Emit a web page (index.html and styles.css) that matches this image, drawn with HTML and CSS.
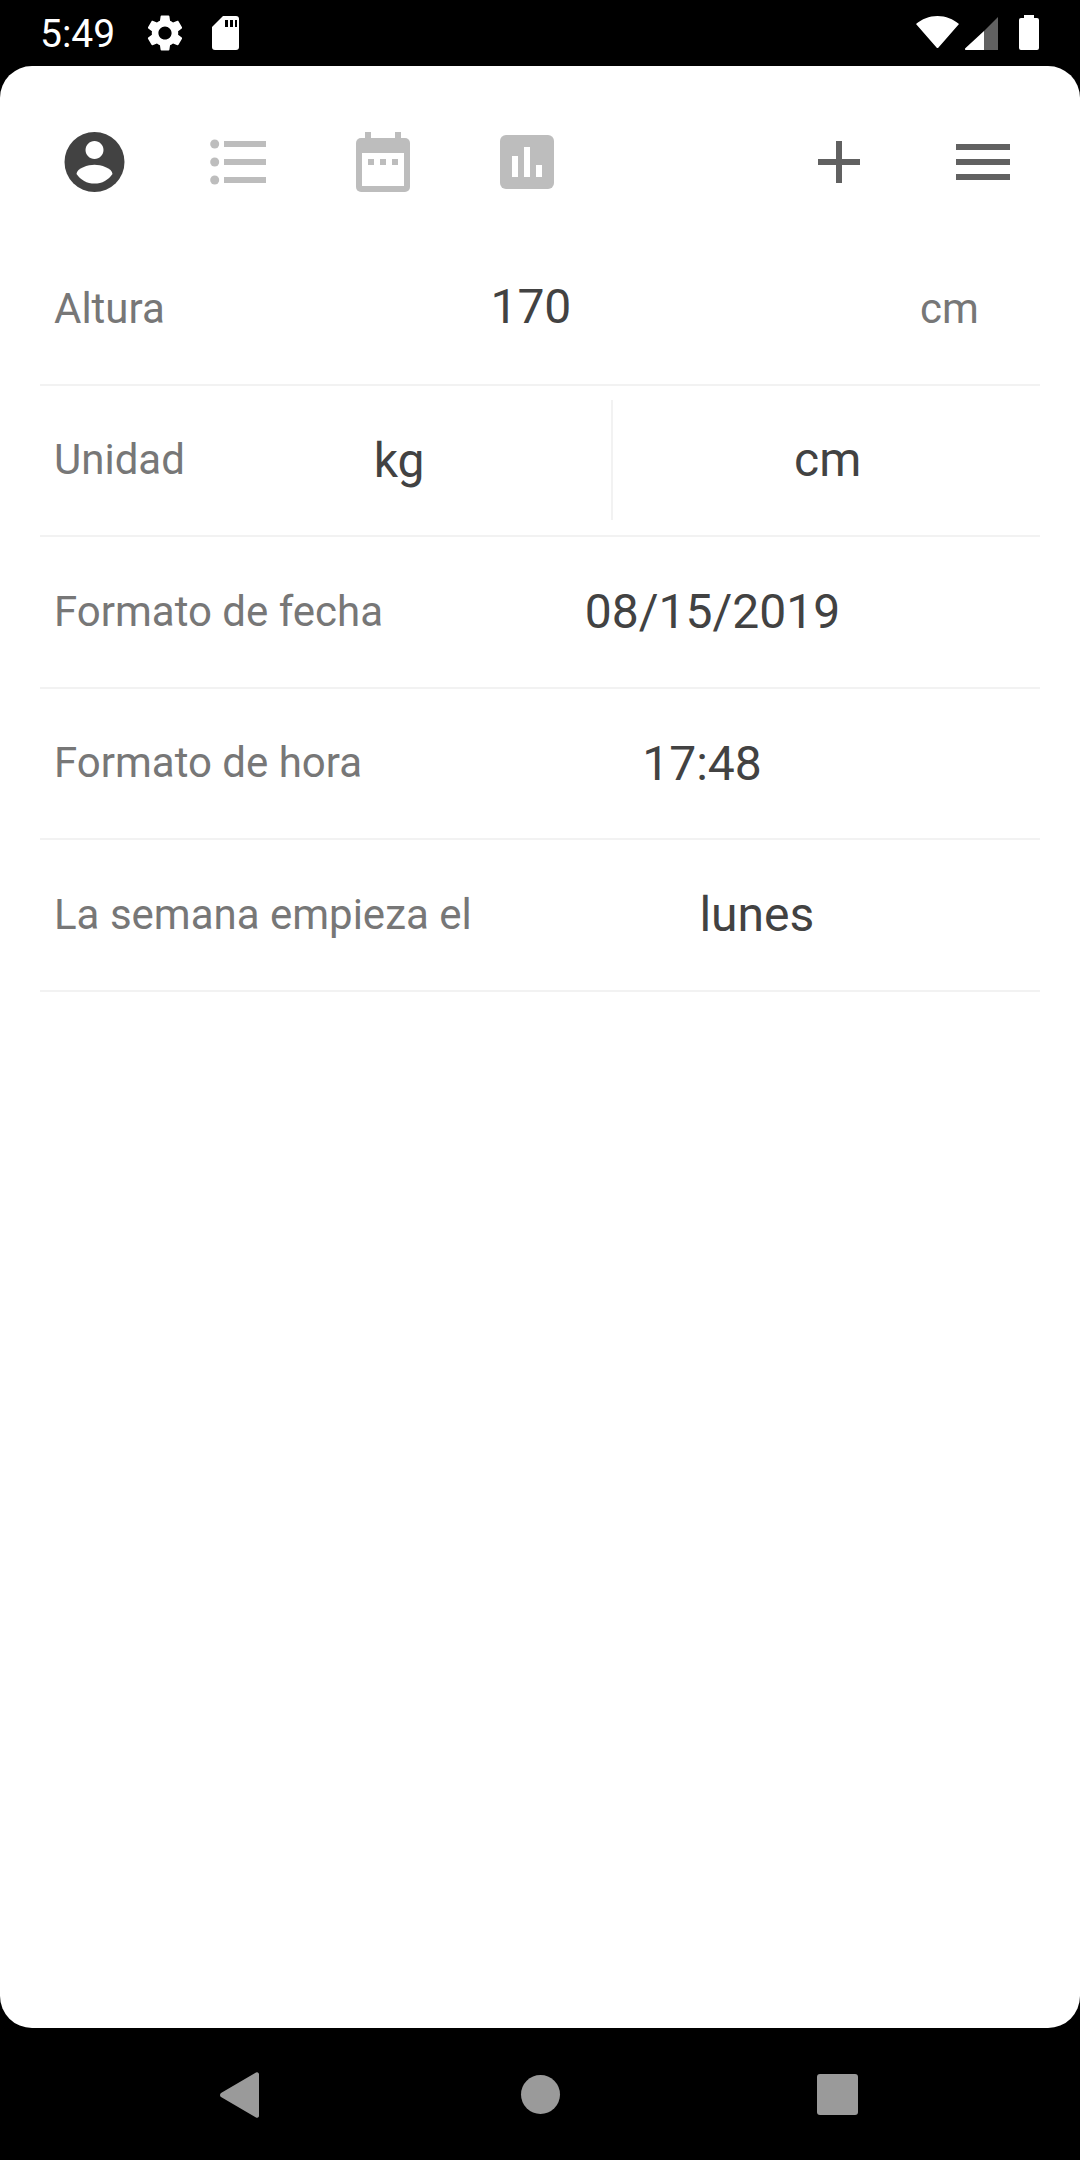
FILE: index.html

```html
<!DOCTYPE html>
<html lang="es">
<head>
    <meta charset="UTF-8">
    <meta name="viewport" content="width=device-width, initial-scale=1.0">
    <title>Ajustes</title>
    <link rel="stylesheet" href="styles.css">
</head>
<body>
    <div class="status-bar">
        <span class="status-time">5:49</span>
        <svg class="gear-icon" width="44" height="66" viewBox="0 0 44 66" fill="#fff"><g transform="translate(0 11) scale(1.8333)"><path fill-rule="evenodd" d="M19.14 12.94c.04-.3.06-.61.06-.94 0-.32-.02-.64-.07-.94l2.03-1.58c.18-.14.23-.41.12-.61l-1.92-3.32c-.12-.22-.37-.29-.59-.22l-2.39.96c-.5-.38-1.03-.7-1.62-.94l-.36-2.54c-.04-.24-.24-.41-.48-.41h-3.84c-.24 0-.43.17-.47.41l-.36 2.54c-.59.24-1.13.57-1.62.94l-2.39-.96c-.22-.08-.47 0-.59.22L2.74 8.87c-.12.21-.08.47.12.61l2.03 1.58c-.05.3-.09.63-.09.94s.02.64.07.94l-2.03 1.58c-.18.14-.23.41-.12.61l1.92 3.32c.12.22.37.29.59.22l2.39-.96c.5.38 1.03.7 1.62.94l.36 2.54c.05.24.24.41.48.41h3.84c.24 0 .44-.17.47-.41l.36-2.54c.59-.24 1.13-.56 1.62-.94l2.39.96c.22.08.47 0 .59-.22l1.92-3.32c.12-.22.07-.47-.12-.61l-2.01-1.58zM12 15.6c-1.98 0-3.6-1.62-3.6-3.6s1.62-3.6 3.6-3.6 3.6 1.62 3.6 3.6-1.62 3.6-3.6 3.6z"/></g></svg>
        <svg class="sd-icon" width="27" height="66" viewBox="0 0 27 66"><path fill="#fff" d="M11 16h13a3 3 0 0 1 3 3v28a3 3 0 0 1-3 3H3a3 3 0 0 1-3-3V27z"/><path fill="#000" d="M13 20h3v7h-3zM18 20h3v7h-3zM23 20h2v7h-2z"/></svg>
        <svg class="wifi-icon" width="43" height="66" viewBox="0 0 43 66"><path fill="#fff" d="M0 24C6 19 13 16 21.5 16S37 19 43 24L22.500 47.500a1.300 1.300 0 0 1-2 0z"/></svg>
        <svg class="signal-icon" width="33" height="66" viewBox="0 0 33 66"><path fill="#616161" d="M19 31 33 17v33H19z"/><path fill="#fff" d="M19 31v19H1a1 1 0 0 1-.700-1.700z"/></svg>
        <svg class="battery-icon" width="20" height="66" viewBox="0 0 20 66"><path fill="#fff" d="M5 15h10v3h3a2 2 0 0 1 2 2v28a2 2 0 0 1-2 2H2a2 2 0 0 1-2-2V20a2 2 0 0 1 2-2h3z"/></svg>
    </div>

    <div class="card">
        <div class="toolbar">
            <div class="tool">
                <svg width="72" height="72" viewBox="0 0 72 72"><circle cx="36.500" cy="36" r="30" fill="#424242"/><g transform="translate(.5 0) scale(3)" fill="#fff"><path d="M12 5c1.66 0 3 1.34 3 3s-1.34 3-3 3-3-1.34-3-3 1.34-3 3-3z"/><path d="M12 19.200c-2.500 0-4.710-1.280-6-3.220.03-1.990 4-3.080 6-3.080 1.990 0 5.970 1.090 6 3.080-1.290 1.940-3.500 3.220-6 3.220z"/></g></svg>
            </div>
            <div class="tool">
                <svg width="72" height="72" viewBox="0 0 72 72" fill="#bdbdbd"><circle cx="12.700" cy="18" r="4.500"/><circle cx="12.700" cy="36" r="4.500"/><circle cx="12.700" cy="54" r="4.500"/><rect x="22" y="15" width="42" height="6"/><rect x="22" y="33" width="42" height="6"/><rect x="22" y="51" width="42" height="6"/></svg>
            </div>
            <div class="tool">
                <svg width="72" height="72" viewBox="0 0 72 72" fill="#bdbdbd"><rect x="19" y="6" width="6" height="8"/><rect x="49" y="6" width="6" height="8"/><rect x="10" y="12" width="54" height="54" rx="5"/><rect x="16" y="27" width="42" height="33" fill="#fff"/><rect x="22" y="33" width="6" height="6"/><rect x="34" y="33" width="6" height="6"/><rect x="46" y="33" width="6" height="6"/></svg>
            </div>
            <div class="tool">
                <svg width="72" height="72" viewBox="0 0 72 72"><rect x="10" y="9" width="54" height="54" rx="6" fill="#bdbdbd"/><g fill="#fff"><rect x="22" y="30" width="6" height="21"/><rect x="34" y="21" width="6" height="30"/><rect x="46" y="39" width="6" height="12"/></g></svg>
            </div>
            <div class="tool tool-push">
                <svg width="72" height="72" viewBox="0 0 72 72" fill="#616161"><rect x="33" y="15" width="6" height="42"/><rect x="15" y="33" width="42" height="6"/></svg>
            </div>
            <div class="tool">
                <svg width="72" height="72" viewBox="0 0 72 72" fill="#616161"><rect x="9" y="18" width="54" height="6"/><rect x="9" y="33" width="54" height="6"/><rect x="9" y="48" width="54" height="6"/></svg>
            </div>
        </div>

        <div class="row">
            <span class="label">Altura</span>
            <span class="value value-raised">170</span>
            <span class="unit">cm</span>
        </div>
        <div class="row">
            <span class="label">Unidad</span>
            <span class="value">kg</span>
            <span class="value value-split">cm</span>
        </div>
        <div class="row">
            <span class="label">Formato de fecha</span>
            <span class="value">08/15/2019</span>
        </div>
        <div class="row">
            <span class="label">Formato de hora</span>
            <span class="value">17:48</span>
        </div>
        <div class="row">
            <span class="label">La semana empieza el</span>
            <span class="value">lunes</span>
        </div>
    </div>

    <div class="nav-bar">
        <svg class="nav-back" width="39" height="46" viewBox="0 0 39 46"><path fill="#9a9a9a" d="M36 .5a2 2 0 0 1 3 1.500v42a2 2 0 0 1-3 1.500L1 25a2.500 2.500 0 0 1 0-4z"/></svg>
        <span class="nav-home"></span>
        <span class="nav-recent"></span>
    </div>
</body>
</html>
```

FILE: styles.css

```css
body { margin: 0; width: 1080px; height: 2160px; display: flex; flex-direction: column; background-color: #000; font-family: Roboto, sans-serif; }
svg { display: block; }

.status-bar { height: 66px; display: flex; align-items: center; padding: 0 41px 0 40px; flex-shrink: 0; }
.status-time { width: 73px; padding-top: 2px; color: #fff; font-size: 39px; white-space: nowrap; }
.gear-icon { margin-left: 30px; }
.sd-icon { margin-left: 25px; }
.wifi-icon { margin-left: auto; }
.signal-icon { margin-left: 6px; }
.battery-icon { margin-left: 21px; }

.card { flex: 1; background-color: #fff; border-radius: 32px; }
.toolbar { height: 108px; padding: 60px 25px 0 22px; display: flex; align-items: flex-start; }
.tool { width: 144px; display: flex; justify-content: center; }
.tool-push { margin-left: auto; }

.row { height: 151.5px; box-sizing: border-box; margin: 0 40px; padding-left: 14px; display: flex; align-items: center; border-bottom: 2px solid #f2f2f2; }
.label { padding-bottom: 1px; color: #777; font-size: 42px; white-space: nowrap; }
.value { flex: 1; padding-left: 2px; color: #424242; font-size: 48px; text-align: center; white-space: nowrap; }
.value-raised { padding-bottom: 4px; }
.value-split { line-height: 120px; border-left: 2px solid #f2f2f2; }
.unit { width: 145px; box-sizing: border-box; padding: 0 60px 0 25px; color: #777; font-size: 42px; }

.nav-bar { height: 132px; display: flex; align-items: center; padding-top: 1px; box-sizing: border-box; flex-shrink: 0; }
.nav-back { margin-left: 220px; }
.nav-home { width: 39px; height: 39px; margin-left: 262px; border-radius: 50%; background-color: #9a9a9a; }
.nav-recent { width: 41px; height: 41px; margin-left: 257px; border-radius: 3px; background-color: #9a9a9a; }
```
